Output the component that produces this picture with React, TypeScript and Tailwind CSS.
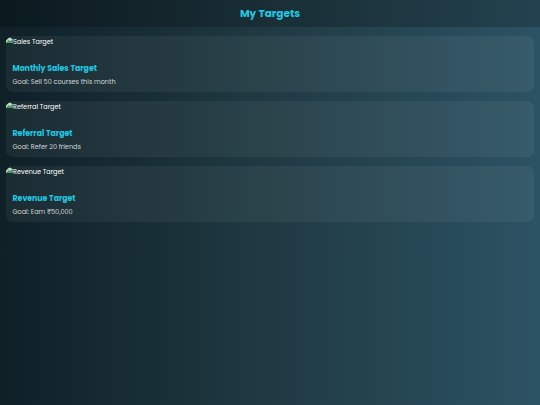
import React from "react";

const targets = [
  { img: "Sales Target", title: "Monthly Sales Target", goal: "Goal: Sell 50 courses this month" },
  { img: "Referral Target", title: "Referral Target", goal: "Goal: Refer 20 friends" },
  { img: "Revenue Target", title: "Revenue Target", goal: "Goal: Earn ₹50,000" },
];

function BrokenImage({ alt }: { alt: string }) {
  return (
    <div className="flex items-start h-[13px] pt-[1px] text-[6.5px] leading-[10px] text-white">
      <svg width="7" height="6" viewBox="0 0 7 6" className="shrink-0">
        <path d="M0 6V3.5L2 1.5L3.5 0.5L5 1L7 2.5V6Z" fill="#c9d6cf" />
        <path d="M0 6L2.5 3L4 4L7 2V6Z" fill="#4f9a57" />
      </svg>
      <span>{alt}</span>
    </div>
  );
}

export default function App() {
  return (
    <div
      className="min-h-screen w-full bg-linear-to-r from-[#0f2027] via-[#203a43] to-[#2c5364]"
      style={{ fontFamily: "Poppins, 'DejaVu Sans', sans-serif" }}
    >
      <header className="h-[27px] flex items-center justify-center bg-black/20">
        <h1 className="text-[10.5px] font-bold text-[#1fc8e3]">My Targets</h1>
      </header>
      <div className="flex flex-col gap-[9px] px-[6px] pt-[9px]">
        {targets.map((t) => (
          <div key={t.title} className="h-[56px] rounded-[7px] bg-white/5 flex flex-col">
            <BrokenImage alt={t.img} />
            <div className="px-[6.5px] pt-[14px]">
              <h2 className="text-[7.8px] leading-[12px] font-bold text-[#1fc8e3]">{t.title}</h2>
              <p className="mt-[2px] text-[6.5px] leading-[9px] text-[#cfd7da]">{t.goal}</p>
            </div>
          </div>
        ))}
      </div>
    </div>
  );
}
